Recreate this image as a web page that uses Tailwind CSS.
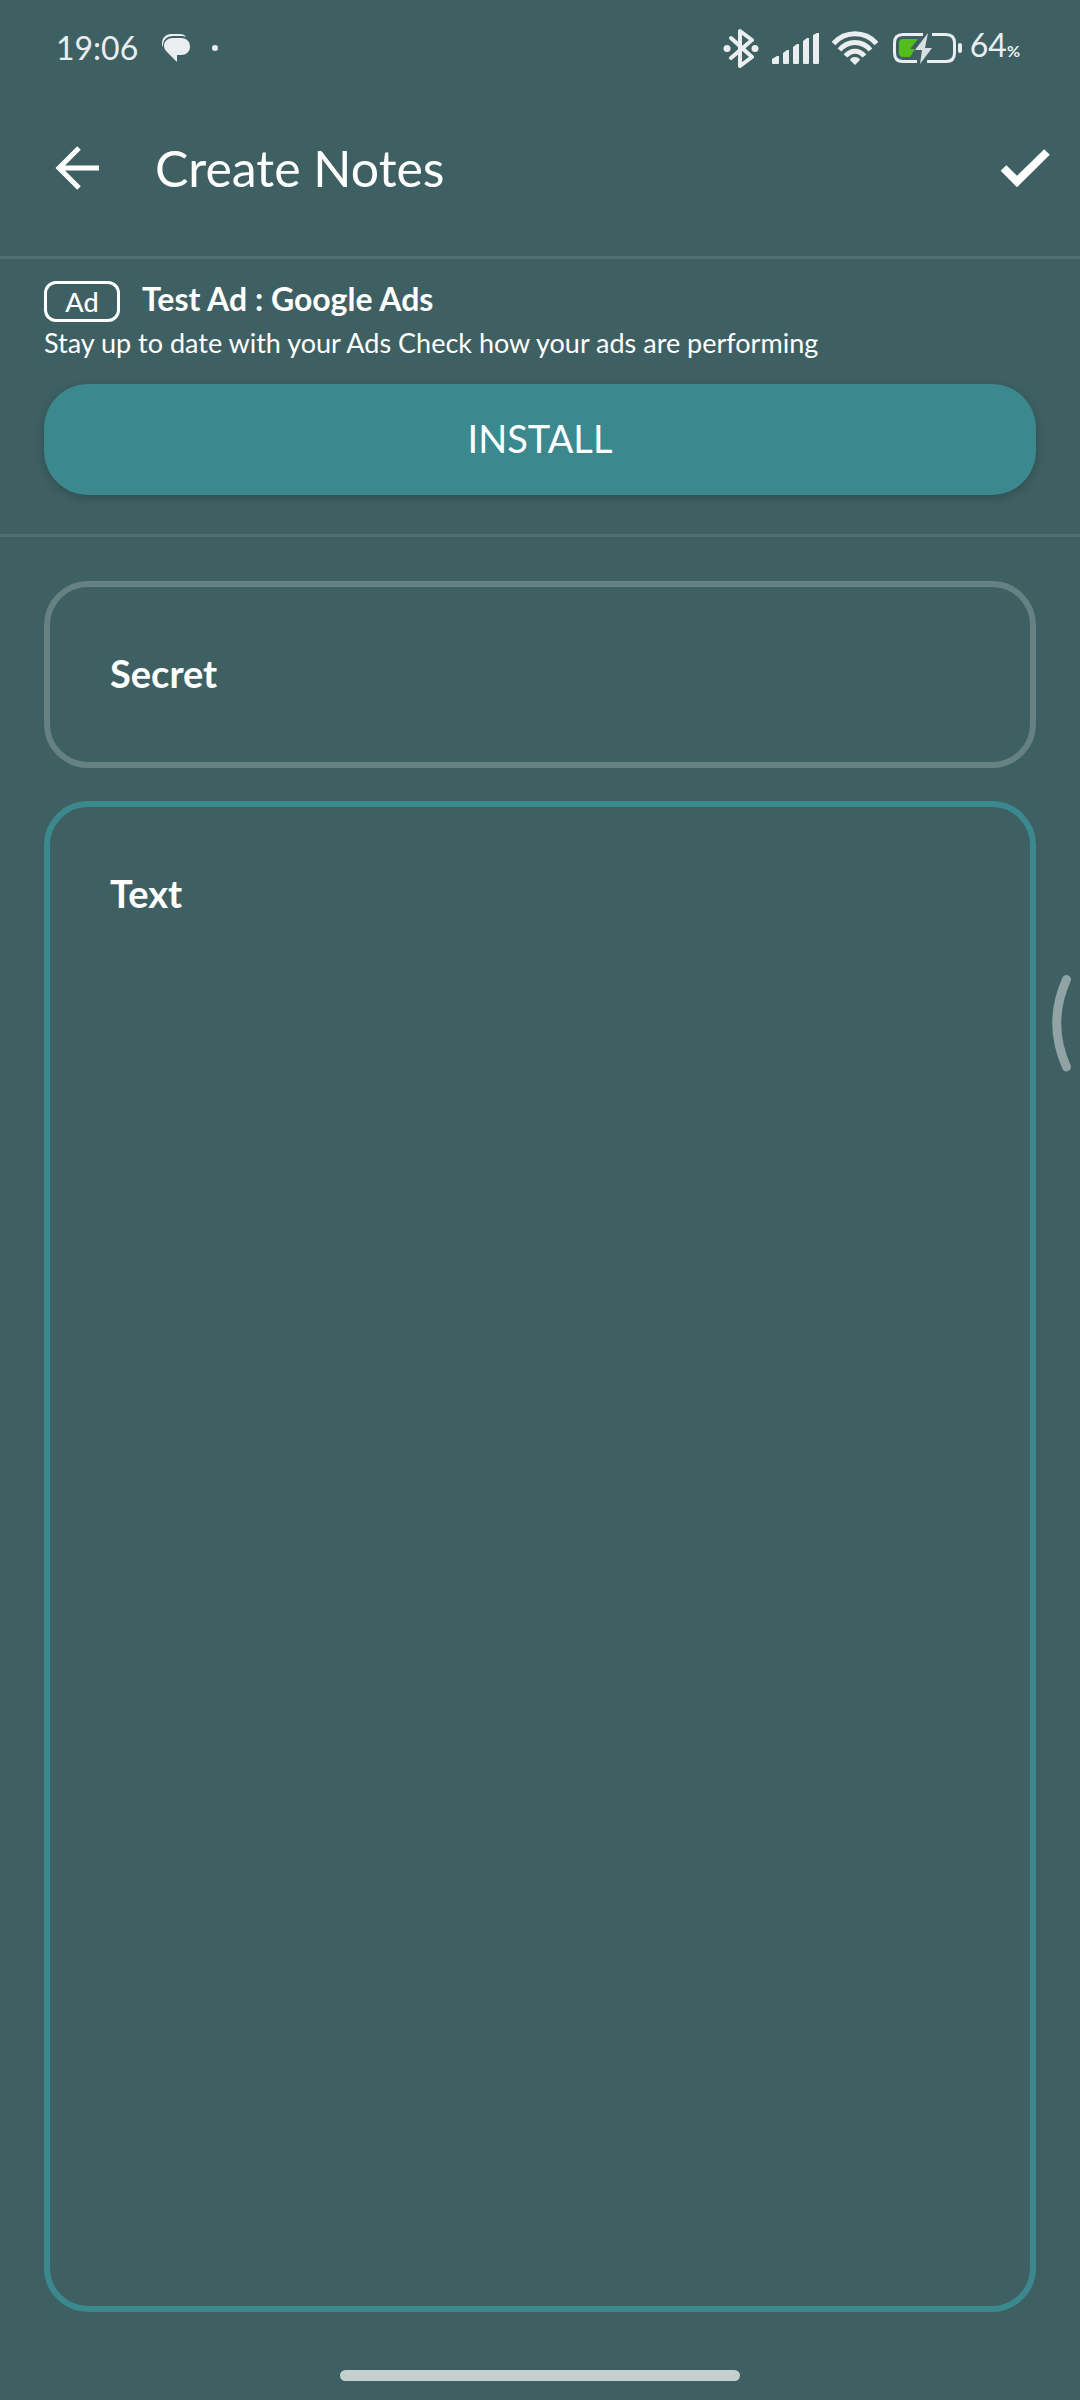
<!DOCTYPE html>
<html lang="en">
<head>
<meta charset="utf-8">
<meta name="viewport" content="width=device-width, initial-scale=1">
<title>Create Notes</title>
<script src="https://cdn.jsdelivr.net/npm/@tailwindcss/browser@4"></script>
</head>
<body class="relative flex min-h-screen flex-col bg-[#3e6062] font-['Lato','Open_Sans',sans-serif] text-white">
  <!-- Status bar -->
  <div class="flex h-20 items-end justify-between pr-[60px] pb-3 pl-14 text-[#ebeef0]">
    <div class="flex h-10 items-center">
      <span class="w-[84px] text-[32px] leading-10">19:06</span>
      <svg class="ml-[22px] h-7 w-7" viewBox="0 0 28 28" fill="currentColor" aria-hidden="true">
        <path d="M0 13V9C0 4 4 0 9 0h9c3 0 5 1 6 3-2-1-3-1-5-1h-8C6 2 1.500 5 1 11z"/>
        <path d="M2 12C2 7 6 4 11 4h8c5 0 9 3 9 8.500S24 21 19 21h-4v7L5 18c-2-2-3-4-3-6z"/>
      </svg>
      <span class="ml-[22px] h-[6px] w-[6px] rounded-full bg-[#ebeef0]"></span>
    </div>
    <div class="flex h-10 items-center">
      <svg class="h-10 w-9" viewBox="0 0 36 40" fill="none" stroke="currentColor" stroke-width="4" stroke-linecap="round" stroke-linejoin="round" aria-hidden="true">
        <path d="M8 10l21 19-12 9V3l12 9L8 30"/>
        <circle cx="4" cy="20.500" r="3.500" fill="currentColor" stroke="none"/>
        <circle cx="32" cy="20.500" r="3.500" fill="currentColor" stroke="none"/>
      </svg>
      <svg class="ml-[13px] h-8 w-12" viewBox="0 0 48 32" fill="currentColor" aria-hidden="true">
        <path d="M0 27l5-3h2v7q0 1-1 1H1q-1 0-1-1zM11 21l4-3h2v13q0 1-1 1h-4q-1 0-1-1zM21 15l4-3h2v19q0 1-1 1h-4q-1 0-1-1zM31 9l4-3h2v25q0 1-1 1h-4q-1 0-1-1zM41 3l4-2h2v30q0 1-1 1h-4q-1 0-1-1z"/>
      </svg>
      <svg class="ml-3 h-[34px] w-[46px]" viewBox="0 0 46 34" fill="none" stroke="currentColor" stroke-width="5" aria-hidden="true">
        <path d="M1.500 12.500C13-.500 33-.500 44.500 12.500"/>
        <path d="M7.500 19C16 9 30 9 38.500 19"/>
        <path d="M13.500 25C19 18.500 27 18.500 32.500 25"/>
        <path d="M23 34l-5-5c1-4 9-4 10 0z" fill="currentColor" stroke="none"/>
      </svg>
      <svg class="ml-[15px] h-8 w-[69px]" viewBox="0 0 69 32" fill="none" aria-hidden="true">
        <path d="M30 2.500H10Q1.500 2.500 1.500 11v10q0 8.500 8.500 8.500h14M39 2.500h14q8.500 0 8.500 8.500v10q0 8.500-8.500 8.500H34" stroke="currentColor" stroke-width="3"/>
        <rect x="65" y="11" width="4" height="10" rx="2" fill="currentColor"/>
        <path d="M10 7h15l-8 10h5l-5 8h-7q-4 0-4-4V11q0-4 4-4z" fill="#53bd1d"/>
        <path d="M35 1L22 18h7l-2 14 12-16h-7z" fill="#d8e0e1"/>
      </svg>
      <span class="ml-2 flex items-baseline leading-10"><span class="text-[32px]">64</span><span class="text-[16px] font-bold">%</span></span>
    </div>
  </div>

  <!-- App bar -->
  <header class="flex h-[179px] items-center border-b-[3px] border-[#4f6e70] pr-[30px] pl-[55px]">
    <button type="button" aria-label="Back">
      <svg class="h-11 w-11" viewBox="0 0 44 44" fill="none" stroke="currentColor" stroke-width="5" aria-hidden="true">
        <path d="M44 22H4M24 2L4 22l20 20"/>
      </svg>
    </button>
    <h1 class="ml-14 flex-1 text-[50px] leading-[60px]">Create Notes</h1>
    <button type="button" aria-label="Save note">
      <svg class="h-10 w-[50px]" viewBox="0 0 50 40" fill="none" stroke="currentColor" stroke-width="8" aria-hidden="true">
        <path d="M3.500 20L17 33.500 47 4"/>
      </svg>
    </button>
  </header>

  <!-- Sponsored banner -->
  <section aria-label="Advertisement" class="border-b-[3px] border-[#4f6e70] px-11 pt-[22px] pb-[39px]">
    <div class="flex items-start gap-[22px]">
      <span class="flex h-[41px] w-[76px] items-center justify-center rounded-xl border-[3px] border-white text-[27px] leading-8 font-medium">Ad</span>
      <h2 class="text-[32px] leading-9 font-bold">Test Ad : Google Ads</h2>
    </div>
    <p class="mt-[5px] mb-[25px] text-[27px] leading-8">Stay up to date with your Ads Check how your ads are performing</p>
    <button type="button" class="block h-[111px] w-full rounded-[44px] bg-[#3b898e] pb-1 text-[38px] leading-[48px] shadow-[0_3px_8px_rgba(0,0,0,0.2)]">INSTALL</button>
  </section>

  <!-- Note form -->
  <form class="flex flex-1 flex-col gap-[33px] px-11 pt-11">
    <input type="text" aria-label="Secret" placeholder="Secret" class="h-[187px] w-full rounded-[44px] border-[6px] border-[#678183] px-[60px] pb-1 text-[38px] leading-[48px] font-bold text-white outline-none placeholder:text-white placeholder:opacity-100">
    <textarea aria-label="Text" placeholder="Text" class="w-full flex-1 resize-none rounded-[44px] border-[6px] border-[#3b898e] px-[60px] py-[62px] text-[38px] leading-[48px] font-bold text-white outline-none placeholder:text-white placeholder:opacity-100"></textarea>
  </form>

  <!-- Gesture navigation -->
  <div class="flex h-[88px] items-end justify-center pb-[19px]">
    <div class="h-[11px] w-[37%] rounded-full bg-[#c5cfd0]"></div>
  </div>

  <!-- Edge panel handle -->
  <svg class="absolute top-[974px] right-2 h-[98px] w-5" viewBox="0 0 20 98" fill="none" stroke="#92a3a5" stroke-width="9" stroke-linecap="round" aria-hidden="true">
    <path d="M14.500 5.500Q-5 49 14.500 93"/>
  </svg>
</body>
</html>
